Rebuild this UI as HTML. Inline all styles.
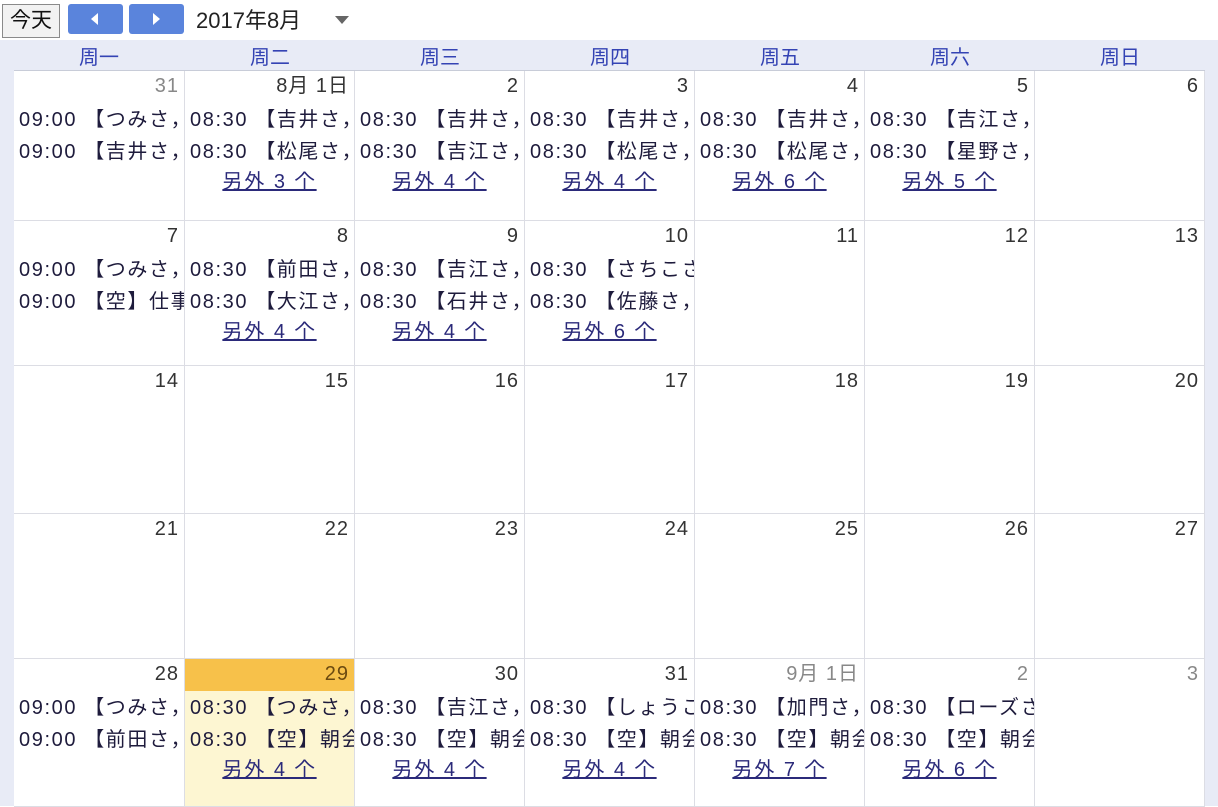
<!DOCTYPE html>
<html><head><meta charset="utf-8"><style>
*{margin:0;padding:0;box-sizing:border-box}
body{width:1218px;height:806px;background:#fff;font-family:"Liberation Sans","Noto Sans CJK JP",sans-serif;color:#1e1b3c;position:relative;overflow:hidden}
.bg{position:absolute;left:0;top:40px;width:1218px;height:766px;background:#e8ebf6}
.today{position:absolute;left:2px;top:4px;width:58px;height:34px;border:1px solid #8a8a8a;background:#f2f2f2;font-size:21px;line-height:32px;text-align:center;color:#111}
.nb{position:absolute;top:4px;width:55px;height:30px;background:#5a84dc;border-radius:3px}
.nb svg{position:absolute;left:20px;top:8px}
.title{position:absolute;left:196px;top:6px;font-size:22px;line-height:30px;color:#222}
.dd{position:absolute;left:335px;top:16px;width:0;height:0;border-left:7px solid transparent;border-right:7px solid transparent;border-top:8px solid #666}
.wd{position:absolute;top:44px;height:26px;width:170px;text-align:center;font-size:20px;line-height:28px;color:#3443b4}
.grid{position:absolute;left:14px;top:70px;display:grid;grid-template-columns:171px 170px 170px 170px 170px 170px 170px;grid-template-rows:150px 145px 148px 145px 148px;background:#fff;border-top:1px solid #c8ccd8}
.c{position:relative;border-right:1px solid #dcdde4;border-bottom:1px solid #dcdde4;overflow:hidden;background:#fff}
.d{position:absolute;right:5px;top:4px;font-size:20px;line-height:22px;color:#333;letter-spacing:1px}
.o .d{color:#888}
.e{position:absolute;left:5px;font-size:20px;line-height:24px;white-space:nowrap;color:#1e1b3c;letter-spacing:1.6px}
.e1{top:37px}.e2{top:69px}
.m{position:absolute;left:0;right:0;top:99px;text-align:center;font-size:20px;line-height:24px;color:#2b2a7a;text-decoration:underline;letter-spacing:2px}
.t{background:#fdf6d2}
.t .hd{position:absolute;left:0;right:0;top:0;height:32px;background:#f7c14a}
.t .d{color:#6b4a10}
</style></head><body>
<div class="bg"></div>
<div class="today">今天</div>
<div class="nb" style="left:68px"><svg width="14" height="14"><path d="M10 1 L3 7 L10 13 Z" fill="#fff"/></svg></div>
<div class="nb" style="left:129px"><svg width="14" height="14"><path d="M4 1 L11 7 L4 13 Z" fill="#fff"/></svg></div>
<div class="title">2017年8月</div>
<div class="dd"></div>
<div class="wd" style="left:14px">周一</div>
<div class="wd" style="left:185px">周二</div>
<div class="wd" style="left:355px">周三</div>
<div class="wd" style="left:525px">周四</div>
<div class="wd" style="left:695px">周五</div>
<div class="wd" style="left:865px">周六</div>
<div class="wd" style="left:1035px">周日</div>
<div class="grid">
<div class="c o"><div class="d">31</div><div class="e e1">09:00 【つみさ，</div><div class="e e2">09:00 【吉井さ，</div></div>
<div class="c"><div class="d">8月 1日</div><div class="e e1">08:30 【吉井さ，</div><div class="e e2">08:30 【松尾さ，</div><div class="m">另外 3 个</div></div>
<div class="c"><div class="d">2</div><div class="e e1">08:30 【吉井さ，</div><div class="e e2">08:30 【吉江さ，</div><div class="m">另外 4 个</div></div>
<div class="c"><div class="d">3</div><div class="e e1">08:30 【吉井さ，</div><div class="e e2">08:30 【松尾さ，</div><div class="m">另外 4 个</div></div>
<div class="c"><div class="d">4</div><div class="e e1">08:30 【吉井さ，</div><div class="e e2">08:30 【松尾さ，</div><div class="m">另外 6 个</div></div>
<div class="c"><div class="d">5</div><div class="e e1">08:30 【吉江さ，</div><div class="e e2">08:30 【星野さ，</div><div class="m">另外 5 个</div></div>
<div class="c"><div class="d">6</div></div>
<div class="c"><div class="d">7</div><div class="e e1">09:00 【つみさ，</div><div class="e e2">09:00 【空】仕事</div></div>
<div class="c"><div class="d">8</div><div class="e e1">08:30 【前田さ，</div><div class="e e2">08:30 【大江さ，</div><div class="m">另外 4 个</div></div>
<div class="c"><div class="d">9</div><div class="e e1">08:30 【吉江さ，</div><div class="e e2">08:30 【石井さ，</div><div class="m">另外 4 个</div></div>
<div class="c"><div class="d">10</div><div class="e e1">08:30 【さちこさん</div><div class="e e2">08:30 【佐藤さ，</div><div class="m">另外 6 个</div></div>
<div class="c"><div class="d">11</div></div>
<div class="c"><div class="d">12</div></div>
<div class="c"><div class="d">13</div></div>
<div class="c"><div class="d">14</div></div>
<div class="c"><div class="d">15</div></div>
<div class="c"><div class="d">16</div></div>
<div class="c"><div class="d">17</div></div>
<div class="c"><div class="d">18</div></div>
<div class="c"><div class="d">19</div></div>
<div class="c"><div class="d">20</div></div>
<div class="c"><div class="d">21</div></div>
<div class="c"><div class="d">22</div></div>
<div class="c"><div class="d">23</div></div>
<div class="c"><div class="d">24</div></div>
<div class="c"><div class="d">25</div></div>
<div class="c"><div class="d">26</div></div>
<div class="c"><div class="d">27</div></div>
<div class="c"><div class="d">28</div><div class="e e1">09:00 【つみさ，</div><div class="e e2">09:00 【前田さ，</div></div>
<div class="c t"><div class="hd"></div><div class="d">29</div><div class="e e1">08:30 【つみさ，</div><div class="e e2">08:30 【空】朝会</div><div class="m">另外 4 个</div></div>
<div class="c"><div class="d">30</div><div class="e e1">08:30 【吉江さ，</div><div class="e e2">08:30 【空】朝会</div><div class="m">另外 4 个</div></div>
<div class="c"><div class="d">31</div><div class="e e1">08:30 【しょうこ</div><div class="e e2">08:30 【空】朝会</div><div class="m">另外 4 个</div></div>
<div class="c o"><div class="d">9月 1日</div><div class="e e1">08:30 【加門さ，</div><div class="e e2">08:30 【空】朝会</div><div class="m">另外 7 个</div></div>
<div class="c o"><div class="d">2</div><div class="e e1">08:30 【ローズさん</div><div class="e e2">08:30 【空】朝会</div><div class="m">另外 6 个</div></div>
<div class="c o"><div class="d">3</div></div>
</div>
</body></html>
